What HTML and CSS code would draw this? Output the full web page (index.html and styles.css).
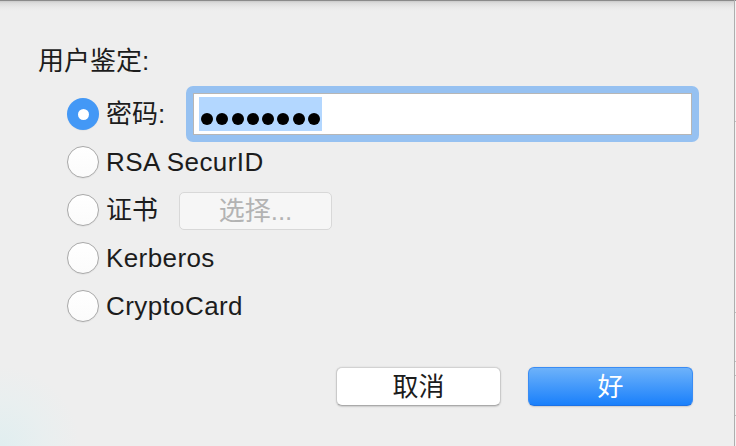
FILE: index.html
```html
<!DOCTYPE html>
<html lang="zh-CN">
<head>
<meta charset="utf-8">
<title>用户鉴定</title>
<link rel="stylesheet" href="styles.css">
</head>
<body>
<div class="screen">
  <div class="dialog">
    <div class="title">用户鉴定:</div>
    <div class="options">
      <div class="row">
        <span class="radio on"></span>
        <span class="label w-pass">密码:</span>
        <div class="ring">
          <div class="field">
            <div class="sel"><i></i><i></i><i></i><i></i><i></i><i></i><i></i><i></i></div>
          </div>
        </div>
      </div>
      <div class="row">
        <span class="radio"></span>
        <span class="label">RSA SecurID</span>
      </div>
      <div class="row">
        <span class="radio"></span>
        <span class="label w-cert">证书</span>
        <span class="choose">选择...</span>
      </div>
      <div class="row">
        <span class="radio"></span>
        <span class="label">Kerberos</span>
      </div>
      <div class="row">
        <span class="radio"></span>
        <span class="label">CryptoCard</span>
      </div>
    </div>
    <div class="actions">
      <button class="btn">取消</button>
      <button class="btn primary">好</button>
    </div>
  </div>
  <div class="edge"></div>
</div>
</body>
</html>
```

FILE: styles.css
```css
html, body {
  margin: 0;
  padding: 0;
  height: 100%;
}

body {
  background: #ededed;
  font-family: "Liberation Sans", "Noto Sans CJK SC", sans-serif;
  font-size: 26px;
  color: #1c1c1c;
  overflow: hidden;
}

.screen {
  display: flex;
  height: 446px;
  width: 736px;
}

.dialog {
  flex: 1;
  display: flex;
  flex-direction: column;
  padding-top: 46px;
  background:
    linear-gradient(#8a8a8a 0, #8a8a8a 1px, #c9c9c9 1px, #dcdcdc 3px, #e8e8e8 7px, rgba(237,237,237,0) 11px),
    radial-gradient(circle at 0 100%, rgba(222, 238, 240, 0.85) 0, rgba(228, 240, 241, 0.5) 45px, rgba(237, 237, 237, 0) 80px),
    #eeeeee;
}

.edge {
  width: 1px;
  border-left: 1px solid #aeaeae;
  background:
    linear-gradient(#8a8a8a 0, #8a8a8a 1px, transparent 1px),
    linear-gradient(transparent 121px, #c0c0c0 121px, #c0c0c0 122px, transparent 122px),
    linear-gradient(transparent 312px, #c0c0c0 312px, #c0c0c0 313px, transparent 313px),
    linear-gradient(transparent 361px, #c0c0c0 361px, #c0c0c0 362px, transparent 362px),
    linear-gradient(transparent 375px, #c0c0c0 375px, #c0c0c0 376px, transparent 376px),
    linear-gradient(transparent 415px, #c0c0c0 415px, #c0c0c0 416px, transparent 416px),
    #f2f2f2;
}

.title {
  padding-left: 38px;
  line-height: 30px;
  height: 30px;
}

.options {
  margin-top: 14px;
  padding-left: 67px;
  display: flex;
  flex-direction: column;
}

.row {
  display: flex;
  align-items: center;
  height: 48px;
}

.radio {
  box-sizing: border-box;
  width: 32px;
  height: 32px;
  border-radius: 50%;
  border: 1px solid #a9a9a9;
  background: linear-gradient(#ffffff, #fbfbfb);
  box-shadow: 0 0.5px 1px rgba(0, 0, 0, 0.08);
  margin-right: 7px;
  flex: none;
  display: flex;
  align-items: center;
  justify-content: center;
}

.radio.on {
  border: none;
  background: #4398f6;
}

.radio.on::after {
  content: "";
  width: 11px;
  height: 11px;
  border-radius: 50%;
  background: #ffffff;
}

.label {
  line-height: 30px;
  letter-spacing: 0.4px;
  white-space: nowrap;
}

.w-pass {
  width: 80px;
  letter-spacing: 0;
}

.w-cert {
  width: 73px;
  letter-spacing: 0;
}

.ring {
  box-sizing: border-box;
  width: 513px;
  height: 56px;
  padding: 7px;
  border-radius: 7px;
  background: #96c1f1;
}

.field {
  box-sizing: border-box;
  height: 42px;
  border: 1px solid #b6b6b6;
  background: #ffffff;
  padding: 3px 0 0 5px;
}

.sel {
  width: 123px;
  height: 34px;
  background: #b3d7ff;
  display: flex;
  align-items: center;
  padding-left: 2px;
  padding-top: 9px;
  box-sizing: border-box;
  gap: 3.3px;
}

.sel i {
  width: 12px;
  height: 12px;
  border-radius: 50%;
  background: #000000;
  flex: none;
}

.choose {
  box-sizing: border-box;
  width: 153px;
  height: 38px;
  border: 1px solid #d8d8d8;
  border-radius: 5px;
  background: #f6f6f6;
  color: #b3b3b3;
  display: flex;
  align-items: center;
  justify-content: center;
  line-height: 36px;
  margin-top: 2px;
}

.actions {
  margin-top: 37px;
  display: flex;
  justify-content: flex-end;
  gap: 27px;
  padding-right: 41px;
}

.btn {
  box-sizing: border-box;
  width: 165px;
  height: 39px;
  border-radius: 6px;
  border: 1px solid #cacaca;
  border-top-color: #d2d2d2;
  border-bottom-color: #aaaaaa;
  background: #ffffff;
  box-shadow: 0 0.5px 1.5px rgba(0, 0, 0, 0.15);
  font-family: "Liberation Sans", "Noto Sans CJK SC", sans-serif;
  font-size: 26px;
  color: #1c1c1c;
  line-height: 36px;
  padding: 0;
  display: flex;
  align-items: center;
  justify-content: center;
}

.btn.primary {
  border: 1px solid #3a8cf4;
  border-bottom-color: #1c72e6;
  background: linear-gradient(#6db2fa, #1a80fb);
  color: #ffffff;
}
```
